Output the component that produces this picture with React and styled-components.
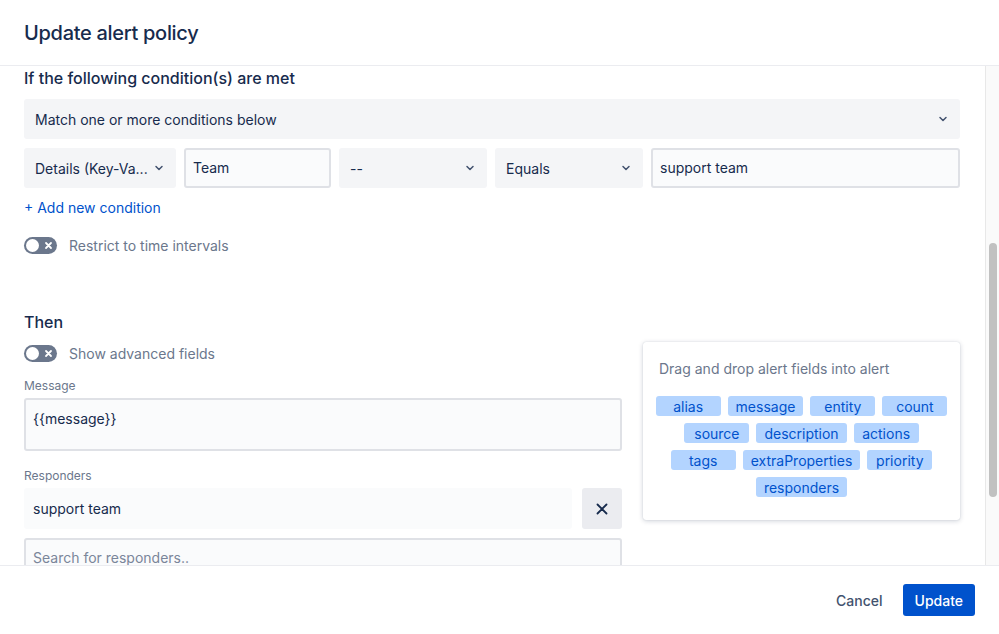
import React from 'react';
import styled, { createGlobalStyle } from 'styled-components';

const GlobalStyle = createGlobalStyle`
  html, body {
    margin: 0;
    padding: 0;
    background: #ffffff;
  }
  body {
    font-family: "Inter", "Noto Sans", "Liberation Sans", sans-serif;
    color: #172B4D;
    -webkit-font-smoothing: antialiased;
  }
  * {
    box-sizing: border-box;
  }
`;

const Modal = styled.div`
  width: 999px;
  height: 634px;
  display: flex;
  flex-direction: column;
  background: #ffffff;
  overflow: hidden;
`;

const Header = styled.header`
  height: 66px;
  flex: none;
  display: flex;
  align-items: center;
  padding: 0 24px 0;
  border-bottom: 1px solid #EBECF0;
`;

const ModalTitle = styled.h1`
  margin: 0;
  font-size: 20px;
  font-weight: 500;
  line-height: 24px;
  letter-spacing: -0.3px;
  color: #172B4D;
`;

const Body = styled.div`
  flex: 1;
  min-height: 0;
  display: flex;
`;

const Content = styled.div`
  flex: 1;
  min-width: 0;
  overflow: hidden;
  padding: 2px 25px 0 24px;
`;

const Track = styled.div`
  width: 14px;
  flex: none;
  display: flex;
  flex-direction: column;
  align-items: center;
  background: #FAFAFA;
  border-left: 1px solid #E8E8E8;
`;

const Thumb = styled.div`
  width: 8px;
  height: 254px;
  margin-top: 177px;
  border-radius: 4px;
  background: #C1C1C1;
`;

const SectionTitle = styled.h2`
  margin: 0;
  font-size: 16px;
  font-weight: 500;
  line-height: 20px;
  color: #172B4D;
  margin-top: ${(p) => p.$top || 0}px;
`;

const Select = styled.div`
  height: 40px;
  width: ${(p) => (p.$width ? `${p.$width}px` : 'auto')};
  flex: ${(p) => (p.$width ? 'none' : 1)};
  display: flex;
  align-items: center;
  gap: 6px;
  padding: 0 12px 0 11px;
  background: #F4F5F7;
  border-radius: 3px;
  font-size: 14px;
  color: #172B4D;
`;

const SelectText = styled.span`
  flex: 1;
  min-width: 0;
  white-space: nowrap;
`;

const MatchSelect = styled(Select)`
  margin-top: 11px;
`;

const ConditionRow = styled.div`
  display: flex;
  gap: 8px;
  margin-top: 9px;
`;

const Input = styled.div`
  height: ${(p) => p.$height || 40}px;
  width: ${(p) => (p.$width ? `${p.$width}px` : 'auto')};
  flex: ${(p) => (p.$width ? 'none' : 1)};
  display: flex;
  align-items: ${(p) => (p.$top ? 'flex-start' : 'center')};
  padding: ${(p) => (p.$top ? '9px 7px' : '0 7px')};
  background: #FAFBFC;
  border: 2px solid #DFE1E6;
  border-radius: 3px;
  font-size: 14px;
  line-height: 20px;
  color: ${(p) => (p.$placeholder ? '#7A869A' : '#172B4D')};
`;

const AddLink = styled.a`
  display: block;
  margin-top: 10px;
  font-size: 14px;
  line-height: 20px;
  color: #0052CC;
  text-decoration: none;
`;

const ToggleRow = styled.div`
  display: flex;
  align-items: center;
  gap: 12px;
  height: 20px;
  margin-top: ${(p) => p.$top || 0}px;
`;

const ToggleTrack = styled.span`
  width: 33px;
  height: 17px;
  flex: none;
  border-radius: 9px;
  background: #6B778C;
  display: flex;
  align-items: center;
  justify-content: space-between;
  padding: 0 4px 0 2px;
`;

const Knob = styled.span`
  width: 13px;
  height: 13px;
  border-radius: 50%;
  background: #ffffff;
`;

const ToggleLabel = styled.span`
  font-size: 14px;
  color: #6B778C;
`;

const Columns = styled.div`
  display: flex;
  gap: 21px;
  margin-top: 10px;
`;

const LeftColumn = styled.div`
  width: 598px;
  flex: none;
`;

const FieldLabel = styled.div`
  margin-top: ${(p) => p.$top || 0}px;
  margin-bottom: 4px;
  font-size: 12px;
  line-height: 16px;
  color: #6B778C;
`;

const ResponderRow = styled.div`
  display: flex;
  gap: 10px;
  margin-bottom: 9px;
`;

const ResponderChip = styled.div`
  flex: 1;
  height: 41px;
  display: flex;
  align-items: center;
  padding: 0 9px;
  background: #FAFBFC;
  border-radius: 3px;
  font-size: 14px;
  color: #172B4D;
`;

const IconButton = styled.button`
  width: 40px;
  height: 41px;
  flex: none;
  border: none;
  border-radius: 3px;
  background: #EBECF0;
  display: flex;
  align-items: center;
  justify-content: center;
  padding: 0;
  color: #172B4D;
`;

const FieldsCard = styled.div`
  width: 317px;
  flex: none;
  align-self: flex-start;
  background: #ffffff;
  border-radius: 3px;
  box-shadow: 0 1px 5px rgba(9, 30, 66, 0.2), 0 0 1px rgba(9, 30, 66, 0.2);
  padding: 17px 12px 23px;
`;

const CardTitle = styled.div`
  padding-left: 4px;
  font-size: 14px;
  line-height: 20px;
  color: #6B778C;
`;

const Chips = styled.div`
  margin-top: 17px;
  display: flex;
  flex-wrap: wrap;
  justify-content: center;
  gap: 7px;
`;

const Chip = styled.span`
  min-width: 65px;
  height: 20px;
  padding: 0 8px;
  display: inline-flex;
  align-items: center;
  justify-content: center;
  background: #B3D4FF;
  border-radius: 3px;
  font-size: 14px;
  color: #0052CC;
`;

const Footer = styled.footer`
  height: 69px;
  flex: none;
  border-top: 1px solid #EBECF0;
  display: flex;
  align-items: center;
  justify-content: flex-end;
  gap: 8px;
  padding: 0 24px 0 0;
`;

const Button = styled.button`
  height: 32px;
  padding: 0 12px;
  border: none;
  border-radius: 3px;
  font-family: inherit;
  font-size: 14px;
  font-weight: 500;
  background: ${(p) => (p.$primary ? '#0052CC' : 'transparent')};
  color: ${(p) => (p.$primary ? '#ffffff' : '#42526E')};
`;

const Chevron = () => (
  <svg width="10" height="10" viewBox="0 0 10 10" fill="none">
    <path d="M2 3.5 L5 6.5 L8 3.5" stroke="#42526E" strokeWidth="1.5" strokeLinecap="round" strokeLinejoin="round" />
  </svg>
);

const SmallCross = () => (
  <svg width="9" height="9" viewBox="0 0 9 9" fill="none">
    <path d="M2 2 L7 7 M7 2 L2 7" stroke="#ffffff" strokeWidth="1.8" strokeLinecap="round" />
  </svg>
);

const Cross = () => (
  <svg width="12" height="12" viewBox="0 0 12 12" fill="none">
    <path d="M1.5 1.5 L10.5 10.5 M10.5 1.5 L1.5 10.5" stroke="#172B4D" strokeWidth="1.8" strokeLinecap="round" />
  </svg>
);

const Toggle = ({ label, top }) => (
  <ToggleRow $top={top}>
    <ToggleTrack>
      <Knob />
      <SmallCross />
    </ToggleTrack>
    <ToggleLabel>{label}</ToggleLabel>
  </ToggleRow>
);

const fields = [
  'alias', 'message', 'entity', 'count',
  'source', 'description', 'actions',
  'tags', 'extraProperties', 'priority',
  'responders',
];

export default function App() {
  return (
    <Modal>
      <GlobalStyle />
      <Header>
        <ModalTitle>Update alert policy</ModalTitle>
      </Header>
      <Body>
        <Content>
          <SectionTitle>If the following condition(s) are met</SectionTitle>
          <MatchSelect>
            <SelectText>Match one or more conditions below</SelectText>
            <Chevron />
          </MatchSelect>
          <ConditionRow>
            <Select $width={152}>
              <SelectText>Details (Key-Va...</SelectText>
              <Chevron />
            </Select>
            <Input $width={147}>Team</Input>
            <Select $width={148}>
              <SelectText>--</SelectText>
              <Chevron />
            </Select>
            <Select $width={148}>
              <SelectText>Equals</SelectText>
              <Chevron />
            </Select>
            <Input>support team</Input>
          </ConditionRow>
          <AddLink href="#">+ Add new condition</AddLink>
          <Toggle label="Restrict to time intervals" top={17} />

          <SectionTitle $top={57}>Then</SectionTitle>
          <Columns>
            <LeftColumn>
              <Toggle label="Show advanced fields" top={1} />
              <FieldLabel $top={15}>Message</FieldLabel>
              <Input $height={53} $top>{'{{message}}'}</Input>
              <FieldLabel $top={17}>Responders</FieldLabel>
              <ResponderRow>
                <ResponderChip>support team</ResponderChip>
                <IconButton aria-label="Remove">
                  <Cross />
                </IconButton>
              </ResponderRow>
              <Input $placeholder>Search for responders..</Input>
            </LeftColumn>
            <FieldsCard>
              <CardTitle>Drag and drop alert fields into alert</CardTitle>
              <Chips>
                {fields.map((f) => (
                  <Chip key={f}>{f}</Chip>
                ))}
              </Chips>
            </FieldsCard>
          </Columns>
        </Content>
        <Track>
          <Thumb />
        </Track>
      </Body>
      <Footer>
        <Button>Cancel</Button>
        <Button $primary>Update</Button>
      </Footer>
    </Modal>
  );
}
